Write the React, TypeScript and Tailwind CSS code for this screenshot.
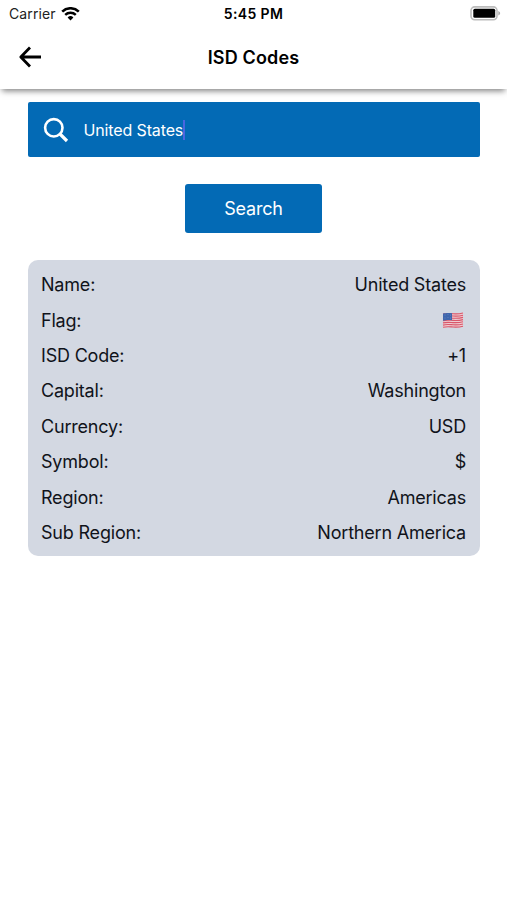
interface DetailRowProps {
  label: string;
  children: React.ReactNode;
}

function DetailRow(props: DetailRowProps) {
  const { label, children } = props;

  return (
    <div className="flex h-[35.43px] items-center justify-between">
      <span>{label}</span>
      <span>{children}</span>
    </div>
  );
}

function WifiIcon() {
  return (
    <svg className="ml-[5.5px] h-[14px] w-[19px]" viewBox="0 0 19 14">
      <path d="M1.2 4.6a12 12 0 0 1 16.6 0" fill="none" stroke="#000" strokeWidth="2.6" />
      <path d="M4.2 7.9a7.6 7.6 0 0 1 10.6 0" fill="none" stroke="#000" strokeWidth="2.4" />
      <path d="M6.6 10.4a4.2 4.2 0 0 1 5.8 0L9.5 13.4z" fill="#000" />
    </svg>
  );
}

function BatteryIcon() {
  return (
    <svg className="h-[15px] w-[31px]" viewBox="0 0 31 15">
      <rect x="1" y="0.9" width="26" height="12.8" rx="3.6" fill="#fff" stroke="#bcbcbc" strokeWidth="1.6" />
      <rect x="3.3" y="2.8" width="21.9" height="9" rx="1.5" fill="#000" />
      <path d="M28.3 5.1c2.4.8 2.4 3.7 0 4.5z" fill="#aaa" />
    </svg>
  );
}

function ArrowLeftIcon() {
  return (
    <svg className="h-[22px] w-[24px]" viewBox="0 0 24 22">
      <path
        d="M12 1.6 2.8 11l9.2 9.400M3 11h20"
        fill="none"
        stroke="#000"
        strokeWidth="2.8"
        strokeLinejoin="round"
      />
    </svg>
  );
}

function SearchIcon() {
  return (
    <svg className="h-[26px] w-[26px]" viewBox="0 0 26 26">
      <circle cx="10.8" cy="10.8" r="8.7" fill="none" stroke="#fff" strokeWidth="2.6" />
      <path d="m17 17 7 7" stroke="#fff" strokeWidth="3.2" />
    </svg>
  );
}

function FlagIcon() {
  return (
    <svg className="mr-[2px] h-[18px] w-[22px]" viewBox="0 0 22 18">
      <path d="M1 2.6C5 1.500 8 2.100 11 2.300s6 .3 10-.8v14c-4 1.200-7 .8-10 .600s-6-.2-10 .8z" fill="#eecbd1" />
      <g fill="none" stroke="#d9576a" strokeWidth="1.15">
        <path d="M1 3.1c4-1.100 7-.500 10-.300s6 .3 10-.8" />
        <path d="M1 5.3c4-1.100 7-.500 10-.300s6 .3 10-.8" />
        <path d="M1 7.5c4-1.100 7-.500 10-.300s6 .3 10-.8" />
        <path d="M1 9.7c4-1.100 7-.500 10-.300s6 .3 10-.8" />
        <path d="M1 11.9c4-1.100 7-.500 10-.300s6 .3 10-.8" />
        <path d="M1 14.1c4-1.100 7-.500 10-.300s6 .3 10-.8" />
        <path d="M1 16.300c4-1.100 7-.500 10-.300s6 .3 10-.8" />
      </g>
      <path d="M1 2.6C5 1.500 7 2 10 2.200v7C7 8.900 5 8.600 1 9.700z" fill="#3f66ad" />
      <g fill="#8fa9d6">
        <circle cx="3" cy="4" r=".4" />
        <circle cx="6" cy="3.700" r=".4" />
        <circle cx="8.500" cy="4" r=".4" />
        <circle cx="3" cy="7" r=".4" />
        <circle cx="6" cy="6.700" r=".4" />
        <circle cx="8.500" cy="7" r=".4" />
      </g>
    </svg>
  );
}

function App() {
  return (
    <div className="min-h-[900px] w-full bg-white font-['Inter','Liberation_Sans',sans-serif] text-black">
      <header className="h-[89px] bg-white shadow-[0_4px_6px_-2px_rgba(0,0,0,0.5)]">
        <div className="grid h-[27px] grid-cols-3 items-center pr-[6px] pl-[9px]">
          <div className="flex items-center text-[14px] tracking-[0.1px] text-[#222]">
            Carrier
            <WifiIcon />
          </div>
          <div className="-ml-[3px] text-center text-[14px] font-semibold tracking-[0.35px]">5:45 PM</div>
          <div className="flex justify-end">
            <BatteryIcon />
          </div>
        </div>
        <div className="grid h-[60px] grid-cols-3 items-center px-[18px]">
          <button>
            <ArrowLeftIcon />
          </button>
          <h1 className="pt-[1px] text-center text-[18px] font-semibold tracking-[0.15px]">ISD Codes</h1>
        </div>
      </header>

      <main className="flex flex-col items-center px-[27.5px] pt-[13px]">
        <div className="flex h-[55px] w-full items-center rounded-[2px] bg-[#036ab5] pl-[15px] text-[16px] text-white">
          <SearchIcon />
          <span className="ml-[15px] tracking-[-0.13px]">United States</span>
          <span className="h-[20px] w-[2px] bg-[#4a66e0]" />
        </div>

        <button className="mt-[27px] h-[49px] w-[137px] rounded-[3px] bg-[#036ab5] text-[18px] tracking-[-0.2px] text-white">
          Search
        </button>

        <div className="mt-[27px] w-full rounded-[10px] bg-[#d3d8e2] px-[13.5px] pt-[7px] pb-[6px] text-[18px] tracking-[-0.2px] text-[#10131a]">
          <DetailRow label="Name:">United States</DetailRow>
          <DetailRow label="Flag:">
            <FlagIcon />
          </DetailRow>
          <DetailRow label="ISD Code:">+1</DetailRow>
          <DetailRow label="Capital:">Washington</DetailRow>
          <DetailRow label="Currency:">USD</DetailRow>
          <DetailRow label="Symbol:">$</DetailRow>
          <DetailRow label="Region:">Americas</DetailRow>
          <DetailRow label="Sub Region:">Northern America</DetailRow>
        </div>
      </main>
    </div>
  );
}

export default App;
